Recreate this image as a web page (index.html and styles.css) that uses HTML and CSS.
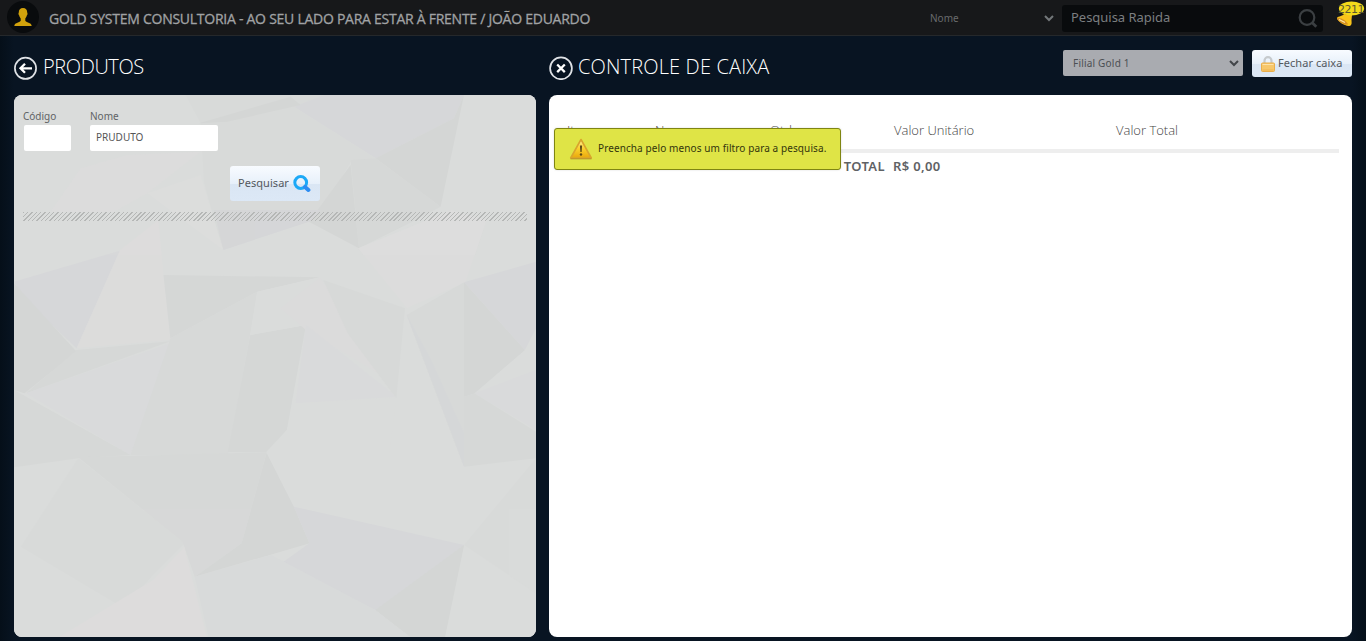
FILE: index.html
```html
<!DOCTYPE html>
<html lang="pt-BR">
<head>
<meta charset="utf-8">
<title>Controle de Caixa</title>
<link rel="stylesheet" href="styles.css">
</head>
<body>
<header class="topbar">
  <div class="avatar">
    <svg width="18" height="18" viewBox="0 0 18 18"><path fill="#d2a20c" d="M9 0C6.300 0 4.800 1.700 4.800 4.300c0 .8-.5 1-.3 1.900.1.600.6.900.7 1.300.3 1.500 1.100 2.200 1.500 3.100v2.200C6.300 14.600.5 14.300.3 18h17.400c-.2-3.700-6-3.400-6.400-5.200v-2.200c.4-.9 1.200-1.600 1.500-3.100.1-.4.6-.7.7-1.300.2-.9-.3-1.100-.3-1.900C13.200 1.700 11.700 0 9 0z"/></svg>
  </div>
  <div class="company"><span class="t-company">GOLD SYSTEM CONSULTORIA - AO SEU LADO PARA ESTAR À FRENTE / JOÃO EDUARDO</span></div>
  <div class="filter"><span class="t-filter">Nome</span>
    <svg width="10" height="7" viewBox="0 0 10 7"><path d="M1 1l4 4 4-4" fill="none" stroke="#73777a" stroke-width="2"/></svg>
  </div>
  <div class="search"><span class="t-search">Pesquisa Rapida</span>
    <svg width="20" height="20" viewBox="0 0 20 20" fill="none" stroke="#3b3f42"><circle cx="9" cy="8.500" r="7.300" stroke-width="2.200"/><path d="M14 13.500l4.300 4.300" stroke-width="2.800"/></svg>
  </div>
  <div class="alerts">
    <svg width="30" height="26" viewBox="0 0 30 26">
      <path d="M8 13l8 1-.5 5c0 2 .5 4-.5 5-1 1.500-4 1-6 0-3-1-7-4-8-6.500C.500 15 6 16 8 13z" fill="#f9c41a"/>
      <path d="M1 17.200c3-1.400 10 2.500 11 6.300-4 .8-10-3-11-6.300z" fill="#d68f22"/>
      <path d="M3 18.500l6 3" stroke="#ffe6a0" stroke-width="1.300"/>
      <ellipse cx="15.500" cy="7.500" rx="12.600" ry="7" fill="#f2d91b"/>
    </svg>
    <span class="count">2211</span>
  </div>
</header>

<main class="columns">
  <section class="products">
    <div class="heading">
      <svg width="24" height="24" viewBox="0 0 24 24" fill="none" stroke="#dfe2e6"><circle cx="11.500" cy="12.300" r="10.600" stroke-width="1.700"/><path d="M18 12.300H7M11 7.800l-4.500 4.500 4.500 4.500" stroke="#fff" stroke-width="2.300"/></svg>
      <h1><span class="t-products">PRODUTOS</span></h1>
    </div>
    <div class="panel panel-textured">
      <svg class="texture" viewBox="40 -315 1502 1626" preserveAspectRatio="none">
        <rect x="40" y="-315" width="1502" height="1626" fill="#dadcdb"/>
        <g transform="translate(40 -315) scale(.959 1)">
          <path fill="#d8dad9" d="M515 0H930L840 35 560 85z"/>
          <path fill="#d6d7d9" d="M930 0H1350L1320 70 1085 190 840 35z"/>
          <path fill="#d8dad9" d="M560 85L840 35 1085 190 1010 200 915 370 625 465 570 260z"/>
          <path fill="#d4d6d5" d="M555 85L830 5 860 30 640 80z"/>
          <path fill="#d4d6d5" d="M1350 0L1280 335 1085 190 1320 70z"/>
          <path fill="#d6d8d7" d="M1010 195L1085 190 1280 335 1195 380 1035 460z"/>
          <path fill="#d4d6d5" d="M885 380L1010 210 1035 460z"/>
          <path fill="#d5d6d8" d="M600 345H920L885 380 628 465z"/>
          <path fill="#dcdddc" d="M400 295L628 465 560 240z"/>
          <path fill="#dcdcdc" d="M200 220L340 180 560 170 400 295 300 350H110z"/>
        </g>
        <g opacity=".85">
        <path fill="#dddddd" d="M1030 145L1300 30 1400 60 1340 247 1170 325z"/>
        <path fill="#d6d7d9" d="M40 245L345 152 220 445 75 300z"/>
        <path fill="#d4d6d5" d="M40 250L220 455 70 580 40 570z"/>
        <path fill="#dddcdc" d="M345 150L455 60 490 420 220 445z"/>
        <path fill="#d6d8d7" d="M220 450L490 424 75 580z"/>
        <path fill="#d9dadc" d="M75 580L490 430 375 765z"/>
        <path fill="#d5d7d6" d="M470 225L920 232 740 275 490 415z"/>
        <path fill="#d7d9d8" d="M490 415L740 275 720 400 655 765H375z"/>
        <path fill="#d5d7d6" d="M720 405L880 375 825 690 765 757H655z"/>
        <path fill="#dbdddc" d="M740 275L920 232 880 375 720 405z"/>
        <path fill="#dcdbdb" d="M805 325L920 232 1135 550 880 390z"/>
        <path fill="#d7d9d8" d="M930 240L1165 325 1140 595 1000 400z"/>
        <path fill="#d9dadb" d="M880 375L1140 590 850 610z"/>
        <path fill="#dbdcdb" d="M850 610L1140 595 1120 760H767L825 690z"/>
        <path fill="#d7d9d8" d="M1170 345L1335 247V800z"/>
        <path fill="#d5d7d8" d="M1170 345L1240 480 1335 700V800z"/>
        <path fill="#d3d5d4" d="M1335 247L1510 450 1365 580 1335 590z"/>
        <path fill="#d6d7d9" d="M1335 247L1542 185V385L1510 450z"/>
        <path fill="#d9dadc" d="M1365 580L1542 510V690z"/>
        <path fill="#d6d8d7" d="M1365 580L1542 695V775L1335 800V590z"/>
        <path fill="#d6d8d7" d="M40 570L75 590 375 765 225 775 40 802z"/>
        <path fill="#d8dad9" d="M225 775L530 1030 350 1220 60 1040z"/>
        <path fill="#d6d8d7" d="M225 772L767 757 695 1030 560 1130 525 1025z"/>
        <path fill="#d3d5d4" d="M767 760L845 920 890 1030 560 1130 695 1030z"/>
        <path fill="#d6d7d9" d="M845 920L1335 1035 1080 1230 810 1090 890 1030z"/>
        <path fill="#d3d5d4" d="M1080 1230L1335 1035 1280 1311H1180z"/>
        <path fill="#dddcdc" d="M170 1311L440 1140 530 1040 595 1311z"/>
        <path fill="#d8dada" d="M560 1130L780 1065 1080 1230 1180 1311H600z"/>
        <path fill="#d8dad9" d="M1542 775L1335 1035 1542 1180z"/>
        </g>
      </svg>
      <form class="product-form">
        <div class="fields">
          <label class="field"><span class="lbl">Código</span><span class="input input-code"></span></label>
          <label class="field"><span class="lbl">Nome</span><span class="input input-name">PRUDUTO</span></label>
        </div>
        <div class="actions">
          <div class="button button-search"><span class="button-text">Pesquisar</span>
            <svg width="18" height="18" viewBox="0 0 18 18" fill="none"><circle cx="7.700" cy="7.500" r="5.900" stroke="#1ca9f7" stroke-width="3"/><path d="M12 12l3.400 3" stroke="#2c8cf2" stroke-width="4" stroke-linecap="round"/></svg>
          </div>
        </div>
        <div class="hatch"></div>
      </form>
    </div>
  </section>

  <section class="cashier">
    <div class="heading">
      <svg width="24" height="24" viewBox="0 0 24 24" fill="none" stroke="#dfe2e6"><circle cx="12" cy="12.300" r="10.900" stroke-width="1.700"/><path d="M8.200 8.500l7.600 7.600M15.800 8.500l-7.600 7.600" stroke="#fff" stroke-width="2.300"/></svg>
      <h1><span class="t-cash">CONTROLE DE CAIXA</span></h1>
      <div class="branch"><span class="t-branch">Filial Gold 1</span>
        <svg width="10" height="7" viewBox="0 0 10 7"><path d="M1 1l4 4 4-4" fill="none" stroke="#424549" stroke-width="2"/></svg>
      </div>
      <div class="button button-close">
        <svg width="14" height="16" viewBox="0 0 14 16"><path d="M3.500 8V4.700a3.500 3.500 0 017 0V8" fill="none" stroke="#c6cacd" stroke-width="2.200"/><rect x=".5" y="7" width="13" height="8.500" rx="1" fill="#f7c76b" stroke="#e9ae4c"/><path d="M1.500 8.500h11" stroke="#fde3ab"/><path d="M1.500 14h11" stroke="#efb550"/></svg>
        <span class="button-text">Fechar caixa</span>
      </div>
    </div>
    <div class="panel panel-cash">
      <div class="table-head">
        <span>Item</span><span>Nome</span><span>Qtde</span><span>Valor Unitário</span><span>Valor Total</span>
      </div>
      <div class="table-total"><span class="sum-label">TOTAL</span><span class="sum-value">R$ 0,00</span></div>
      <div class="toast">
        <svg width="24" height="22" viewBox="0 0 24 22"><defs><linearGradient id="warn" x2="0" y2="1"><stop stop-color="#fff09a"/><stop offset=".5" stop-color="#fbd02c"/><stop offset="1" stop-color="#e9a70c"/></linearGradient></defs><path d="M12 1.500L22.300 20H1.700z" fill="url(#warn)" stroke="#d9a52c" stroke-width="1.600" stroke-linejoin="round"/><path d="M1.500 20.800h21" stroke="#b98c28"/><path d="M10.900 7.500h2.200l-.5 6.500h-1.200z" fill="#5c4a16"/><circle cx="12" cy="16.500" r="1.200" fill="#5c4a16"/></svg>
        <span class="t-toast">Preencha pelo menos um filtro para a pesquisa.</span>
      </div>
    </div>
  </section>
</main>
</body>
</html>
```

FILE: styles.css
```css
* { box-sizing: border-box; }
body {
  margin: 0;
  height: 641px;
  overflow: hidden;
  background: linear-gradient(90deg, #050f19 0, #081422 14px, #081422 1352px, #050f19 100%);
  color: #555;
  font-family: "Noto Sans", sans-serif;
  font-size: 10px;
}
span { white-space: nowrap; }
svg { display: block; flex: none; }
.topbar { display: flex; height: 36px; background: #17181a; border-bottom: 1px solid #25282b; }
.avatar { display: flex; align-items: center; justify-content: center; width: 32px; height: 32px; margin: 1px 0 0 7px; border-radius: 50%; background: #090b0d; }
.company { width: 891px; padding-left: 10px; font: 400 14px/38px "Open Sans", sans-serif; color: #a0a2a4; }
.t-company { letter-spacing: -0.26px; -webkit-text-stroke: 0.3px #a0a2a4; }
.filter { display: flex; align-items: center; justify-content: space-between; width: 124px; height: 37px; color: #696b6d; }
.t-filter { line-height: 13px; padding-bottom: 1px; }
.search { display: flex; align-items: center; justify-content: space-between; width: 261px; height: 27px; margin: 5px 0 0 8px; padding: 0 5px 0 9px; border-radius: 3px; background: #090b0d; color: #7b7e80; font-size: 13px; }
.t-search { padding-bottom: 3px; letter-spacing: -0.03px; }
.alerts { position: relative; margin: 1px 0 0 13px; }
.count { position: absolute; left: 2px; top: 1px; color: #5c5931; font: 11px/15px "DejaVu Sans", sans-serif; letter-spacing: -0.5px; }

.columns { display: grid; grid-template-columns: 522px 803px; column-gap: 13px; padding: 0 14px; }
.heading { display: flex; align-items: flex-start; height: 59px; }
.heading > svg { margin-top: 20px; }
h1 { margin: 0 auto 0 5px; color: #fff; font: 300 20px/62px "Open Sans", sans-serif; }
.t-products { letter-spacing: -0.4px; }
.t-cash { letter-spacing: 0.15px; }
.branch { display: flex; align-items: center; justify-content: space-between; width: 180px; height: 26px; margin: 14px 9px 0 0; padding: 0 4px 0 10px; border-radius: 2px; background: #a9abb0; color: #4c4f53; }
.t-branch { padding-bottom: 1px; letter-spacing: 0.2px; }
.button { display: flex; align-items: center; border-radius: 3px; background: linear-gradient(#f8fbff, #e7f0fa 51%, #dae6f4 52%, #dce8f6); color: #53585e; font-size: 11px; }
.button-text { padding-bottom: 2px; letter-spacing: 0.05px; }
.button-close { width: 100px; height: 27px; margin-top: 14px; padding-left: 9px; gap: 3px; }
.panel { position: relative; height: 542px; border-radius: 8px; overflow: hidden; background: #fff; }
.texture { position: absolute; inset: 0; width: 100%; height: 100%; }
.product-form { position: relative; padding: 15px 9px 0; }
.fields { display: flex; gap: 19px; }
.field { display: flex; flex-direction: column; color: #606365; }
.lbl { height: 15px; line-height: 13px; }
.input { height: 26px; background: #fff; border-radius: 2px; line-height: 25px; }
.input-code { width: 47px; margin-left: 1px; }
.input-name { width: 128px; padding-left: 6px; color: #555; }
.actions { display: flex; justify-content: center; padding-top: 15px; }
.button-search { width: 90px; height: 35px; padding-left: 8px; gap: 4px; }
.hatch { height: 9px; margin-top: 11px; background: repeating-linear-gradient(135deg, #b5b7b6 0 1px, transparent 1px 3.08px); }
.panel-cash { padding: 16px 13px; }
.table-head, .table-total { display: grid; grid-template-columns: 88px 115px 124px 222px 1fr; padding-left: 5px; }
.table-head { height: 42px; border-bottom: 4px solid #eee; font: 300 13px/38px "Open Sans", sans-serif; color: #454545; }
.table-total { font: 600 13px/26px "Noto Sans", sans-serif; color: #5f6265; }
.sum-label { grid-column: 1 / 4; padding-right: 9px; text-align: right; letter-spacing: 0.4px; }
.sum-value { margin-left: -1px; letter-spacing: 0.35px; }
.toast { position: absolute; left: 5px; top: 33px; display: flex; align-items: center; gap: 5px; width: 287px; height: 42px; padding-left: 14px; border: 1px solid #7f8512; border-radius: 3px; background: #dfe446; box-shadow: 0 0 2px #8885; color: #33350c; }
.t-toast { padding-bottom: 2px; letter-spacing: 0.1px; }
```
